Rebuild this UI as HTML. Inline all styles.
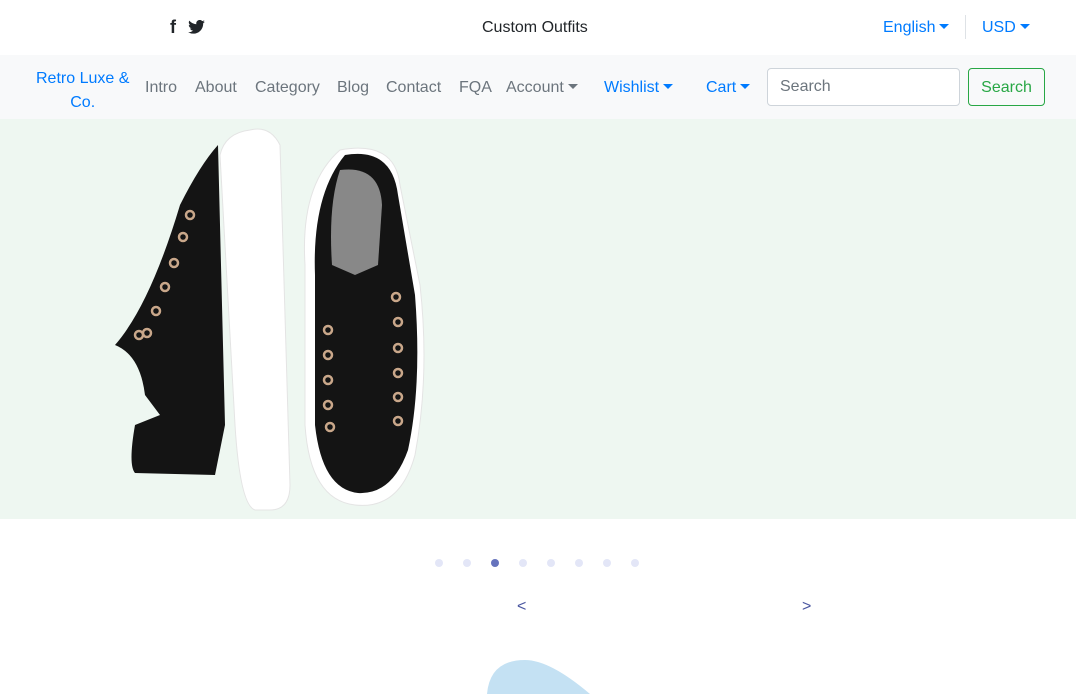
<!DOCTYPE html>
<html><head><meta charset="utf-8"><style>
*{margin:0;padding:0;box-sizing:border-box}
body{width:1076px;height:694px;overflow:hidden;background:#fff;font-family:"Liberation Sans",sans-serif;font-size:16px;position:relative}
.a{position:absolute;white-space:nowrap}
.g{color:#6c757d}.b{color:#007bff}
.car{display:inline-block;width:0;height:0;border-left:5px solid transparent;border-right:5px solid transparent;border-top:5px solid currentColor;vertical-align:3px;margin-left:4px}
.dot{position:absolute;top:559px;width:8px;height:8px;border-radius:50%;background:#e3e6f7}
</style></head><body>
<div class="a" style="left:170px;top:17px;font-size:18px;color:#212529;font-weight:bold">f</div>
<svg class="a" style="left:188px;top:20px" width="17" height="14" viewBox="0 0 24 20"><path fill="#212529" d="M24 2.4a10 10 0 0 1-2.8.8A5 5 0 0 0 23.3.4a10 10 0 0 1-3.1 1.2A4.9 4.9 0 0 0 11.8 6 14 14 0 0 1 1.7.9a4.9 4.9 0 0 0 1.5 6.6 5 5 0 0 1-2.2-.6 4.9 4.9 0 0 0 3.9 4.8 5 5 0 0 1-2.2.1 4.9 4.9 0 0 0 4.6 3.4A9.9 9.9 0 0 1 0 17.3 14 14 0 0 0 7.5 19.5c9 0 14-7.5 14-14v-.6A10 10 0 0 0 24 2.4z"/></svg>
<div class="a" style="left:482px;top:19px;color:#212529">Custom Outfits</div>
<div class="a b" style="left:883px;top:19px">English<span class="car"></span></div>
<div class="a" style="left:965px;top:15px;width:1px;height:24px;background:#dee2e6"></div>
<div class="a b" style="left:982px;top:19px">USD<span class="car"></span></div>
<div class="a" style="left:0;top:55px;width:1076px;height:64px;background:#f8f9fa"></div>
<div class="a b" style="left:36px;top:67px;text-align:center;line-height:24px">Retro Luxe &amp;<br>Co.</div>
<div class="a g" style="left:145px;top:79px">Intro</div>
<div class="a g" style="left:195px;top:79px">About</div>
<div class="a g" style="left:255px;top:79px">Category</div>
<div class="a g" style="left:337px;top:79px">Blog</div>
<div class="a g" style="left:386px;top:79px">Contact</div>
<div class="a g" style="left:459px;top:79px">FQA</div>
<div class="a g" style="left:506px;top:79px">Account<span class="car"></span></div>
<div class="a b" style="left:604px;top:79px">Wishlist<span class="car"></span></div>
<div class="a b" style="left:706px;top:79px">Cart<span class="car"></span></div>
<div class="a" style="left:767px;top:68px;width:193px;height:38px;border:1px solid #ced4da;border-radius:4px;background:#fff;padding:9px 12px;color:#6c757d">Search</div>
<div class="a" style="left:968px;top:68px;width:77px;height:38px;border:1px solid #28a745;border-radius:4px;color:#28a745;text-align:center;padding-top:10px">Search</div>
<div class="a" style="left:0;top:119px;width:1076px;height:400px;background:#eef7f1"></div>
<svg class="a" style="left:100px;top:125px" width="340" height="390">
<path d="M150 5 Q170 0 180 20 L190 360 Q190 385 170 385 L155 385 Q140 380 135 300 L120 30 Q125 8 150 5Z" fill="#fff" stroke="#e4e4e4"/>
<path d="M118 20 L125 300 L115 350 L35 348 Q28 340 35 300 L60 290 L45 270 Q40 230 15 220 Q50 180 80 80 Q100 40 118 20Z" fill="#141414"/>
<g fill="none" stroke="#c9a78a" stroke-width="2.5"><circle cx="90" cy="90" r="4"/><circle cx="83" cy="112" r="4"/><circle cx="74" cy="138" r="4"/><circle cx="65" cy="162" r="4"/><circle cx="56" cy="186" r="4"/><circle cx="47" cy="208" r="4"/><circle cx="39" cy="210" r="4"/></g>
<path d="M240 25 Q295 15 300 60 L320 160 Q330 250 315 330 Q300 385 255 380 Q210 375 205 300 L205 140 Q200 60 240 25Z" fill="#fff" stroke="#e4e4e4"/>
<path d="M245 30 Q292 22 298 70 L315 170 Q322 260 308 325 Q292 370 258 368 Q222 364 215 300 L215 150 Q212 70 245 30Z" fill="#141414"/>
<path d="M240 45 Q280 40 282 80 L278 140 L255 150 L232 140 Q228 80 240 45Z" fill="#888"/>
<g fill="none" stroke="#c9a78a" stroke-width="2.5"><circle cx="228" cy="205" r="4"/><circle cx="228" cy="230" r="4"/><circle cx="228" cy="255" r="4"/><circle cx="228" cy="280" r="4"/><circle cx="230" cy="302" r="4"/><circle cx="296" cy="172" r="4"/><circle cx="298" cy="197" r="4"/><circle cx="298" cy="223" r="4"/><circle cx="298" cy="248" r="4"/><circle cx="298" cy="272" r="4"/><circle cx="298" cy="296" r="4"/></g>
</svg>
<div class="dot" style="left:435px"></div><div class="dot" style="left:463px"></div>
<div class="dot" style="left:491px;background:#6673bd"></div><div class="dot" style="left:519px"></div>
<div class="dot" style="left:547px"></div><div class="dot" style="left:575px"></div>
<div class="dot" style="left:603px"></div><div class="dot" style="left:631px"></div>
<div class="a" style="left:517px;top:598px;color:#4a56a0">&lt;</div>
<div class="a" style="left:802px;top:598px;color:#4a56a0">&gt;</div>
<svg class="a" style="left:480px;top:655px" width="120" height="39"><path d="M7 39 Q10 5 45 5 Q70 5 110 39Z" fill="#c4e1f3"/></svg>
</body></html>
